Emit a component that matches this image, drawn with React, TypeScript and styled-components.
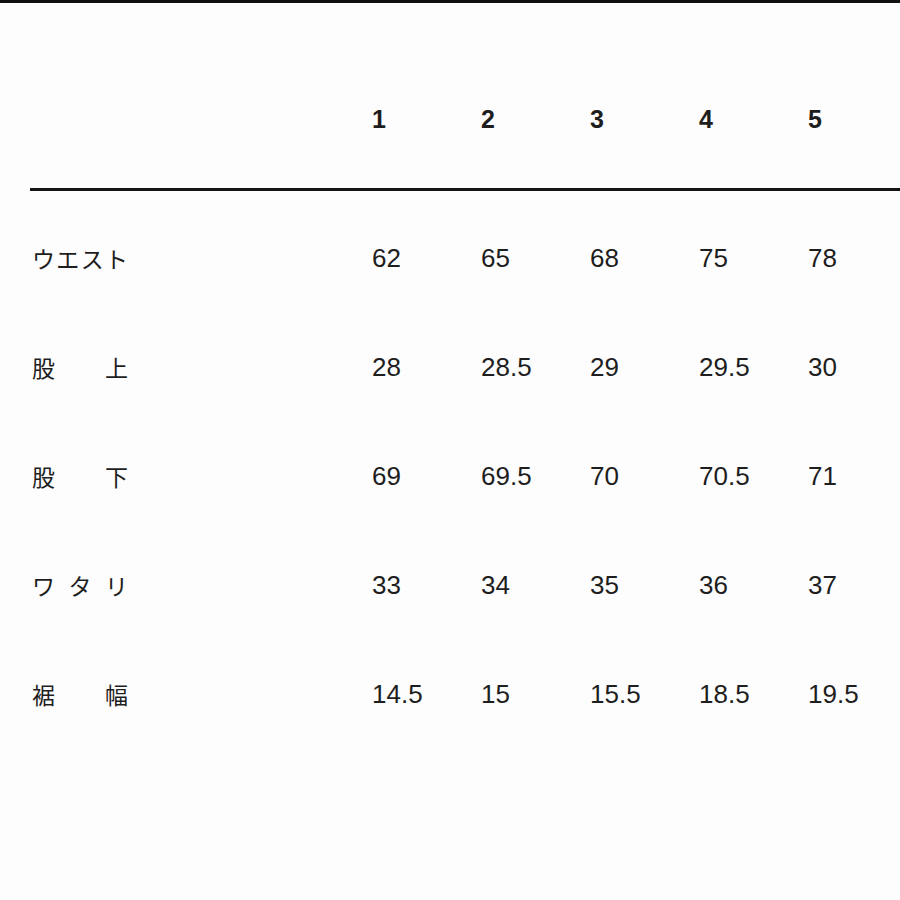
import styled, { createGlobalStyle } from 'styled-components';

const sizes = ['1', '2', '3', '4', '5'];

const rows = [
  { label: 'ウエスト', values: ['62', '65', '68', '75', '78'] },
  { label: '股上', values: ['28', '28.5', '29', '29.5', '30'] },
  { label: '股下', values: ['69', '69.5', '70', '70.5', '71'] },
  { label: 'ワタリ', values: ['33', '34', '35', '36', '37'] },
  { label: '裾幅', values: ['14.5', '15', '15.5', '18.5', '19.5'] },
];

const GlobalStyle = createGlobalStyle`
  html, body {
    margin: 0;
    padding: 0;
    background: #fdfdfd;
  }
`;

function App() {
  return (
    <>
      <GlobalStyle />
      <Page>
        <HeaderRow>
          <span />
          {sizes.map((s) => (
            <HeadCell key={s}>{s}</HeadCell>
          ))}
        </HeaderRow>
        <Divider />
        <Body>
          {rows.map((row) => (
            <Row key={row.label}>
              <Label>
                {Array.from(row.label).map((ch, i) => (
                  <span key={i}>{ch}</span>
                ))}
              </Label>
              {row.values.map((v, i) => (
                <Cell key={i}>{v}</Cell>
              ))}
            </Row>
          ))}
        </Body>
      </Page>
    </>
  );
}

const Page = styled.div`
  width: 900px;
  height: 900px;
  box-sizing: border-box;
  border-top: 3px solid #111;
  overflow: hidden;
  color: #1e1e1e;
  font-family: 'Liberation Sans', Arial, sans-serif;
`;

const Grid = styled.div`
  display: grid;
  grid-template-columns: 340px repeat(5, 109px);
  padding-left: 32px;
  align-items: center;
`;

const HeaderRow = styled(Grid)`
  padding-top: 101px;
  padding-bottom: 54px;
  line-height: 30px;
`;

const HeadCell = styled.div`
  font-size: 25px;
  font-weight: bold;
`;

const Divider = styled.div`
  margin-left: 30px;
  height: 3px;
  background: #151515;
`;

const Body = styled.div`
  padding-top: 12px;
`;

const Row = styled(Grid)`
  height: 109px;
`;

const Label = styled.div`
  width: 96px;
  display: flex;
  justify-content: space-between;
  font-family: 'Noto Sans CJK JP', sans-serif;
  font-size: 23px;
  line-height: 30px;
`;

const Cell = styled.div`
  font-size: 26px;
  line-height: 30px;
`;

export default App;
